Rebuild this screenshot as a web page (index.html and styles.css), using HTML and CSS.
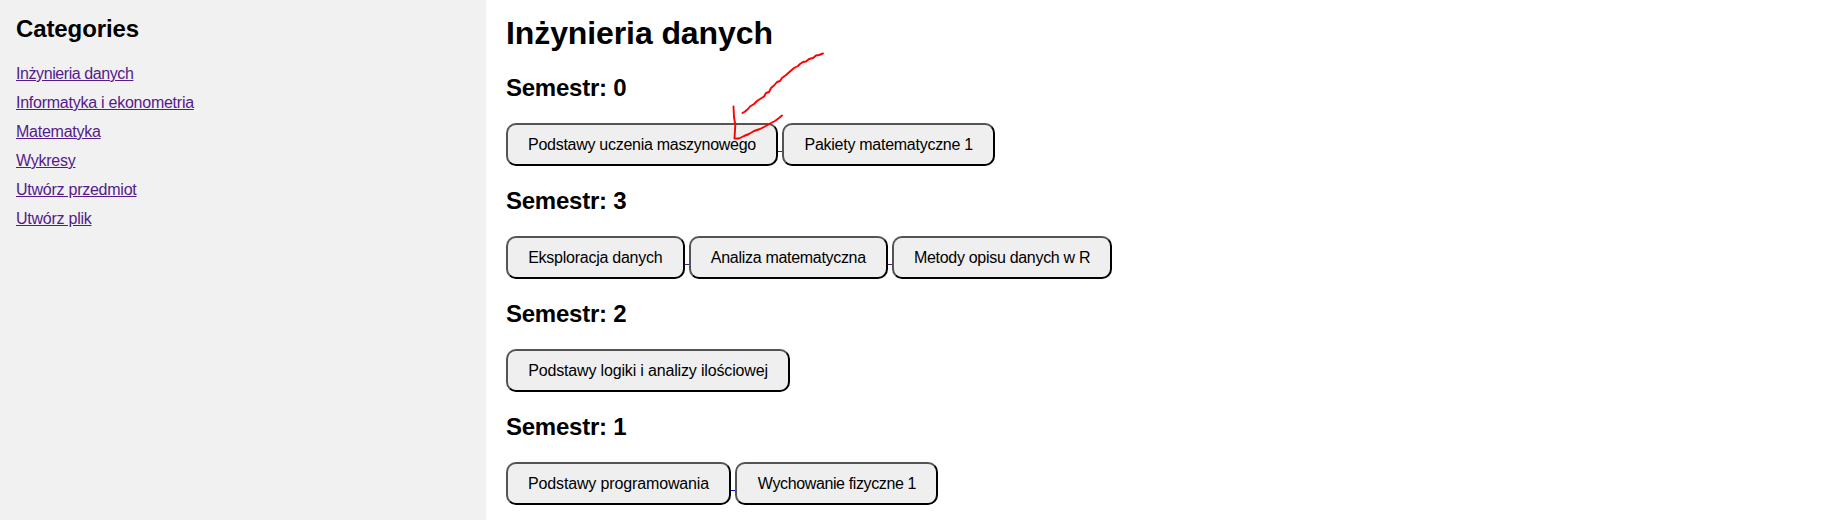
FILE: index.html
```html
<!DOCTYPE html>
<html lang="pl">
<head>
<meta charset="utf-8">
<title>Inżynieria danych</title>
<link rel="stylesheet" href="styles.css">
</head>
<body>
<div class="layout">
  <nav class="sidebar">
    <h2 class="sidebar-title">Categories</h2>
    <a class="nav-link tight" href="#">Inżynieria danych</a>
    <a class="nav-link" href="#">Informatyka i ekonometria</a>
    <a class="nav-link" href="#">Matematyka</a>
    <a class="nav-link" href="#">Wykresy</a>
    <a class="nav-link" href="#">Utwórz przedmiot</a>
    <a class="nav-link" href="#">Utwórz plik</a>
  </nav>
  <main class="content">
    <h1 class="title">Inżynieria danych</h1>
    <section class="semester">
      <h2 class="semester-title">Semestr: 0</h2>
      <div class="subjects"><a class="subject" href="#"><button class="btn w272">Podstawy uczenia maszynowego</button> </a><a class="subject" href="#"><button class="btn w212">Pakiety matematyczne 1</button></a></div>
    </section>
    <section class="semester">
      <h2 class="semester-title">Semestr: 3</h2>
      <div class="subjects"><a class="subject" href="#"><button class="btn w179">Eksploracja danych</button> </a><a class="subject" href="#"><button class="btn w199">Analiza matematyczna</button> </a><a class="subject" href="#"><button class="btn w220">Metody opisu danych w R</button></a></div>
    </section>
    <section class="semester">
      <h2 class="semester-title">Semestr: 2</h2>
      <div class="subjects"><a class="subject" href="#"><button class="btn w284">Podstawy logiki i analizy ilościowej</button></a></div>
    </section>
    <section class="semester">
      <h2 class="semester-title">Semestr: 1</h2>
      <div class="subjects"><a class="subject unvisited" href="#"><button class="btn w225">Podstawy programowania</button> </a><a class="subject unvisited" href="#"><button class="btn w203">Wychowanie fizyczne 1</button></a></div>
    </section>
    <svg class="arrow" width="100" height="100" viewBox="730 45 100 100" fill="none" stroke="#ff0000" stroke-width="1.9" stroke-linecap="round" stroke-linejoin="round">
      <path d="M823 53.500L819 55L816 55.500L813 58L809 59L806 61.500L803 62L800 64L798 66L794 68L790 71.500L786 75L782 78L780 81L777 82L774 85.500L771 88L769 92L766 93L764 96.500L760 99L757 101L754 104L750 106.500L748 109L745 111.500L742.500 113"/>
      <path d="M733.500 106.500L734 117L735.300 125L734.500 138.500L739 138.500L744 136L749 134L754 131L760 129L765 126.500L770 123.500L775 121L779 118L782 115.500"/>
    </svg>
  </main>
</div>
</body>
</html>
```

FILE: styles.css
```css
* { box-sizing: border-box; }

body {
  margin: 0;
  font-family: "Liberation Sans", Arial, sans-serif;
  font-size: 16px;
  color: #000;
  background: #fff;
  overflow: hidden;
}

.layout { display: flex; height: 520px; }

.sidebar {
  flex: 0 0 486px;
  display: flex;
  flex-direction: column;
  align-items: flex-start;
  gap: 11px;
  padding: 15px 16px;
  background: #f1f1f1;
}

.sidebar-title {
  margin: 0 0 12px;
  font-size: 24px;
  line-height: 27px;
  letter-spacing: -0.1px;
}

.nav-link {
  line-height: 18px;
  letter-spacing: -0.25px;
  color: #551a8b;
}

.nav-link.tight { letter-spacing: -0.42px; }

.content {
  position: relative;
  flex: 1;
  padding: 15px 20px 0;
}

.title {
  margin: 0 0 22px;
  font-size: 32px;
  line-height: 37px;
  letter-spacing: -0.1px;
}

.semester { height: 113px; }

.semester-title {
  margin: 0 0 22px;
  font-size: 24px;
  line-height: 27px;
  letter-spacing: -0.25px;
}

.subjects { line-height: 18px; white-space: nowrap; }

.subject { color: #551a8b; }
.subject.unvisited { color: #0000ee; }

.btn {
  height: 43px;
  padding: 0;
  border: 2px outset #000;
  border-radius: 10px;
  background: #efefef;
  color: #000;
  font: 16px "Liberation Sans", Arial, sans-serif;
}

.w179 { width: 178.6px; letter-spacing: -0.25px; }
.w199 { width: 198.6px; letter-spacing: -0.3px; }
.w203 { width: 203px; letter-spacing: -0.38px; }
.w212 { width: 212.6px; letter-spacing: -0.27px; }
.w220 { width: 220px; letter-spacing: -0.3px; }
.w225 { width: 225px; letter-spacing: -0.14px; }
.w272 { width: 272px; letter-spacing: -0.28px; }
.w284 { width: 284px; letter-spacing: -0.16px; }

/* Hand-drawn pointer lying over the first subject */
.arrow {
  position: absolute;
  left: 244px;
  top: 45px;
}
```
